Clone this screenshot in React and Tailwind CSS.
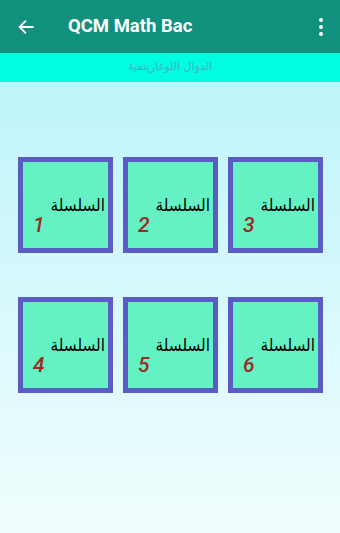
import React from 'react';

// --- Series tile ---
const SeriesCard = ({ num }) => (
    <div className="w-[95px] h-[96px] border-[5px] border-[#5a5cc4] bg-[#64f2c4] flex flex-col items-stretch pt-[32px] pr-[3px] pl-[4px]">
        <div dir="rtl" className="text-right text-[17px] leading-[22px] text-black font-['DejaVu_Sans_Condensed','DejaVu_Sans',sans-serif]">
            السلسلة
        </div>
        <div className="pl-[6px] -mt-[2px] text-[21px] leading-[22px] italic font-medium text-[#9a2a24] font-['Roboto',sans-serif]">
            {num}
        </div>
    </div>
);

const App = () => {
    return (
        <div className="w-[340px] h-[533px] flex flex-col bg-gradient-to-b from-[#b4f3fb] to-[#f1fdfd] font-['Roboto',sans-serif]">
            {/* App bar */}
            <div className="h-[53px] bg-[#11907e] flex items-center text-white shrink-0">
                <div className="w-[52px] pl-[17px] flex items-center">
                    <svg width="18" height="18" viewBox="0 0 24 24" fill="none" stroke="white" strokeWidth="2.4" strokeLinecap="square">
                        <path d="M21 12H4M11 4.5L3.5 12l7.5 7.5" />
                    </svg>
                </div>
                <div className="ml-[16px] text-[18.5px] font-bold">QCM Math Bac</div>
                <div className="ml-auto mr-[17px] flex flex-col gap-[3px] items-center">
                    <span className="w-[4px] h-[4px] rounded-full bg-white" />
                    <span className="w-[4px] h-[4px] rounded-full bg-white" />
                    <span className="w-[4px] h-[4px] rounded-full bg-white" />
                </div>
            </div>

            {/* Chapter title */}
            <div className="h-[29px] bg-[#00fde3] flex items-center justify-center shrink-0">
                <span dir="rtl" className="text-[11px] text-[#42b2c6] font-['DejaVu_Sans',sans-serif]">الدوال اللوغاريتمية</span>
            </div>

            {/* Series grid */}
            <div className="pt-[75px] pl-[18px] grid grid-cols-[repeat(3,95px)] gap-x-[10px] gap-y-[44px]">
                {[1, 2, 3, 4, 5, 6].map(n => (
                    <SeriesCard key={n} num={n} />
                ))}
            </div>
        </div>
    );
};

export default App;
